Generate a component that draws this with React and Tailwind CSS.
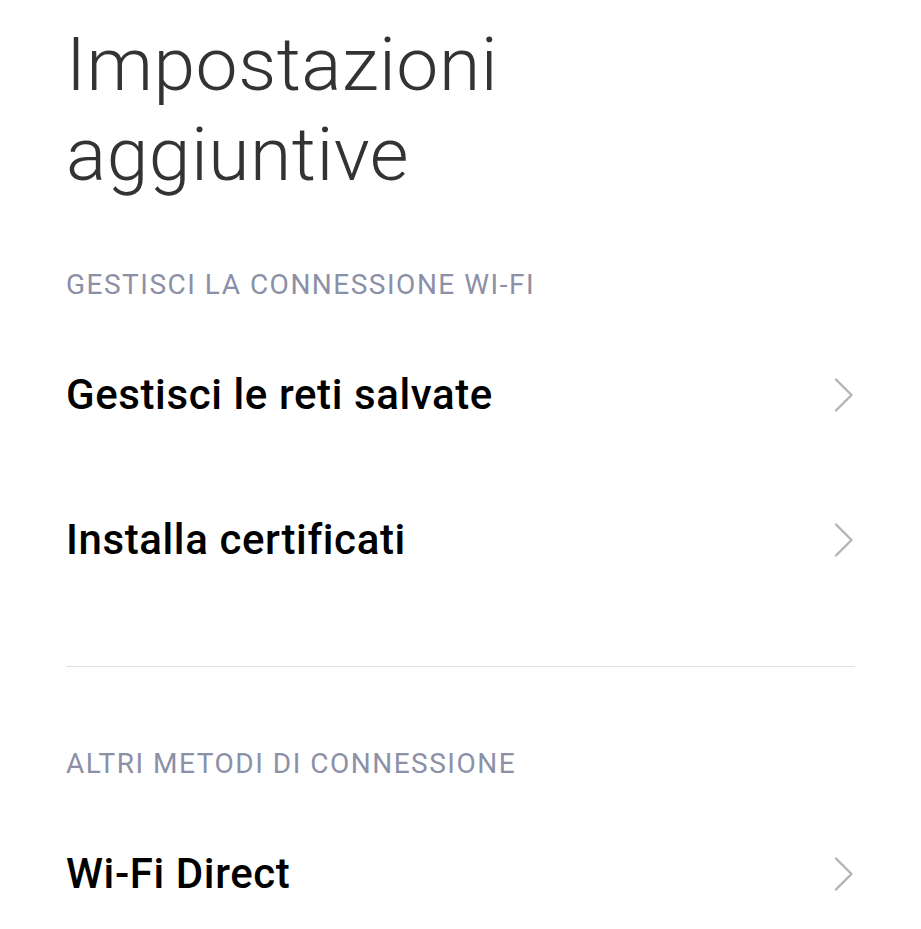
import React from 'react';

const Chevron = () => (
  <svg className="w-[22px] h-[34px] text-[#b4b4b4]" viewBox="0 0 22 34" fill="none" stroke="currentColor">
    <path d="M3 1.5l15.5 15.5L3 32.5" strokeWidth={2.4} strokeLinecap="round" strokeLinejoin="round" />
  </svg>
);

const Row = ({ label }) => (
  <button className="w-full h-[145px] flex items-center justify-between text-left">
    <span className="text-[42px] font-medium text-black tracking-[0.6px]">{label}</span>
    <Chevron />
  </button>
);

const SectionHeader = ({ children }) => (
  <p className="h-[74px] flex items-center text-[28px] text-[#8c90a6] uppercase tracking-[1.5px]">{children}</p>
);

export default function App() {
  return (
    <div className="min-h-screen bg-white px-[66px] font-['Roboto',sans-serif]">
      <h1 className="pt-[19px] text-[75px] font-light leading-[90px] text-[#333333] tracking-[0.5px]">
        Impostazioni
        <br />
        aggiuntive
      </h1>

      <div className="mt-[49px]">
        <SectionHeader>Gestisci la connessione Wi-Fi</SectionHeader>
        <Row label="Gestisci le reti salvate" />
        <Row label="Installa certificati" />
      </div>

      <div className="mt-[54px] h-px bg-[#e2e2e2]" />

      <div className="mt-[60px]">
        <SectionHeader>Altri metodi di connessione</SectionHeader>
        <Row label="Wi-Fi Direct" />
      </div>
    </div>
  );
}
